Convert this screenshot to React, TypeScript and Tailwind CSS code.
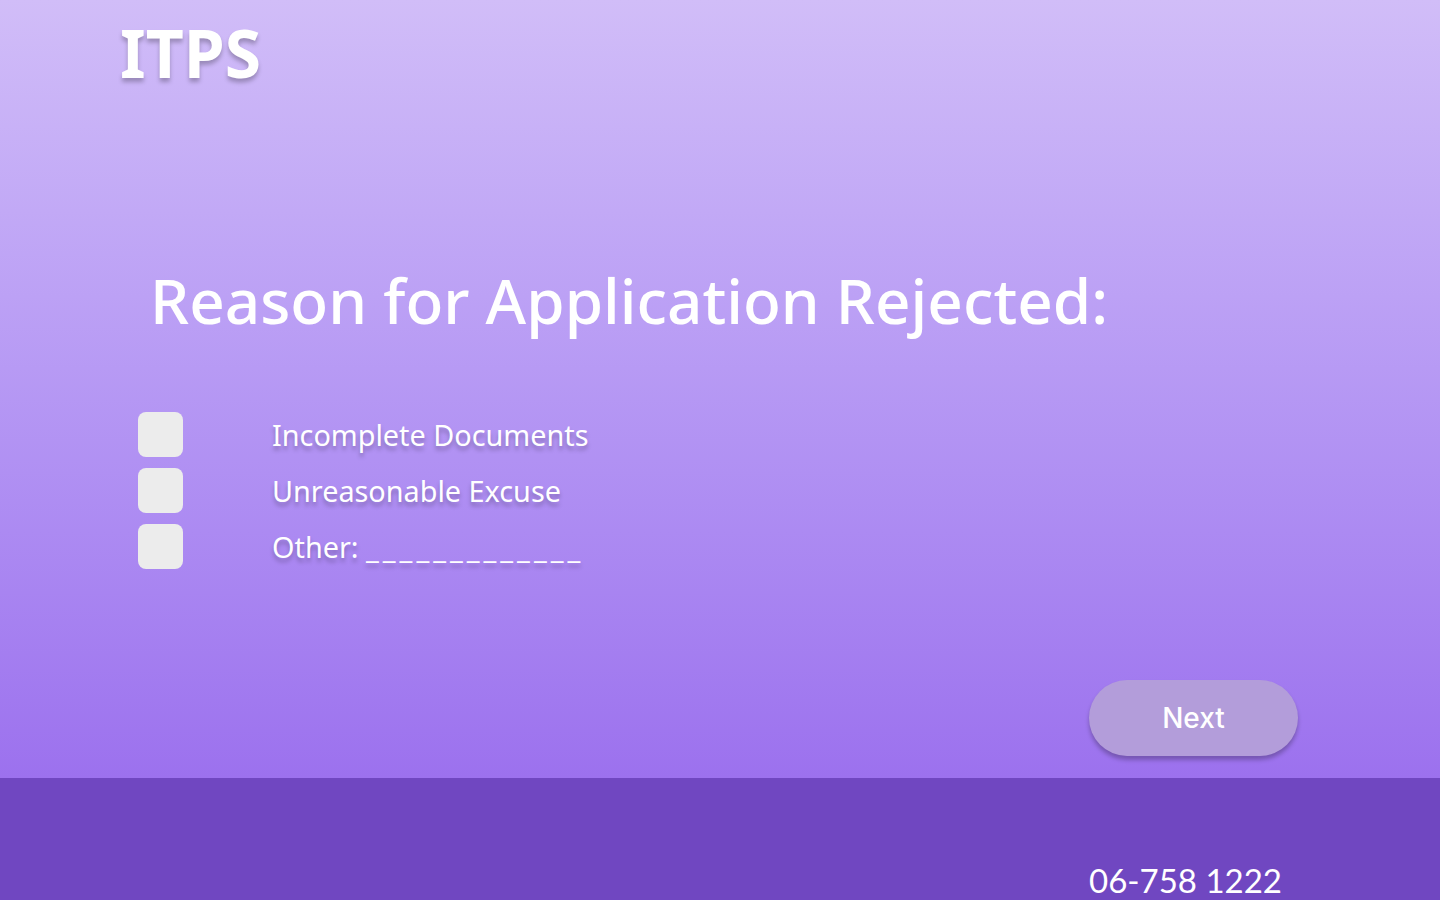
import React from 'react';

const reasons = ['Incomplete Documents', 'Unreasonable Excuse'];

const App: React.FC = () => {
    return (
        <div className="w-[1440px] h-[900px] overflow-hidden flex flex-col font-['Noto_Sans',sans-serif] text-white">
            {/* Main */}
            <div className="h-[778px] bg-gradient-to-b from-[#d1bdf8] to-[#9c71ee] flex flex-col">
                <div className="pl-[120px] pt-[12px] h-[100px]">
                    <h1 className="text-[66px] leading-[80px] font-bold [text-shadow:0_4px_4px_rgba(0,0,0,0.25)]">ITPS</h1>
                </div>

                <h2 className="pl-[150px] mt-[160px] text-[62px] leading-[80px] font-medium">
                    Reason for Application Rejected:
                </h2>

                <div className="pl-[138px] mt-[72px] flex flex-col gap-[11px]">
                    {reasons.map((r) => (
                        <div key={r} className="flex items-center">
                            <div className="w-[45px] h-[45px] rounded-[8px] bg-[#ececec]" />
                            <span className="ml-[89px] text-[28.8px] leading-[45px] [text-shadow:0_4px_4px_rgba(0,0,0,0.25)]">{r}</span>
                        </div>
                    ))}
                    <div className="flex items-center">
                        <div className="w-[45px] h-[45px] rounded-[8px] bg-[#ececec]" />
                        <span className="ml-[89px] text-[28.8px] leading-[45px] [text-shadow:0_4px_4px_rgba(0,0,0,0.25)]">
                            Other: <span className="tracking-[4px]">_____________</span>
                        </span>
                    </div>
                </div>

                <div className="flex justify-end pr-[142px] mt-[111px]">
                    <button className="w-[209px] h-[76px] rounded-full bg-[#b39dda] shadow-[0_4px_4px_rgba(0,0,0,0.25)] text-[28px] font-medium font-['Inter',sans-serif]">
                        Next
                    </button>
                </div>
            </div>

            {/* Footer */}
            <div className="flex-1 bg-[#7047c1] flex justify-end items-end pr-[158px]">
                <span className="font-['Lato',sans-serif] text-[33px] leading-[40px]">06-758 1222</span>
            </div>
        </div>
    );
};

export default App;
